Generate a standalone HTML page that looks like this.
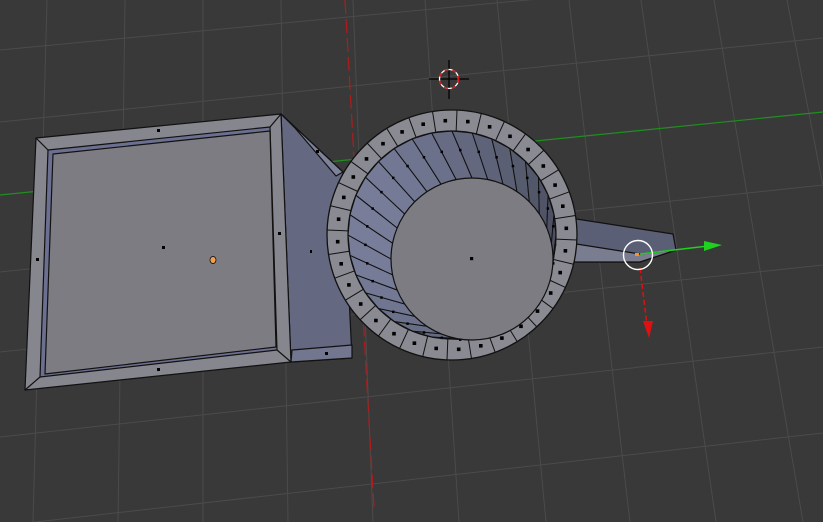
<!DOCTYPE html>
<html><head><meta charset="utf-8"><style>
html,body{margin:0;padding:0;background:#393939;overflow:hidden}
svg{display:block}
</style></head><body>
<svg id="s" width="823" height="522" viewBox="0 0 823 522" xmlns="http://www.w3.org/2000/svg">
<rect width="823" height="522" fill="#393939"/>
<g id="grid" stroke="#4b4b4b" stroke-width="1" fill="none"></g>
<line x1="0" y1="195" x2="823" y2="112" stroke="#1f8f1f" stroke-width="1.2"/>
<line x1="345" y1="0" x2="374" y2="508" stroke="#b01c1c" stroke-width="1.2" stroke-dasharray="14,5"/>

<g stroke="#111" stroke-width="1.2" stroke-linejoin="round">
 <polygon points="281,114 343,172 352,358 291,362" fill="#646880"/>
 <polygon points="281,114 295,128 336,176 343,172" fill="#7d8199"/>
 <polygon points="291,362 352,358 352,345 292,350" fill="#72768e"/>
 <polygon points="36,138 281,114 291,362 25,390" fill="#86868e"/>
 <polygon points="48,150 270,127 277,350 40,377" fill="#6c7090"/>
 <polygon points="53,154 270,131 276,347 45,374" fill="#7c7c82"/>
 <line x1="36" y1="138" x2="48" y2="150"/><line x1="281" y1="114" x2="270" y2="127"/>
 <line x1="291" y1="362" x2="277" y2="350"/><line x1="25" y1="390" x2="40" y2="377"/>
</g>
<g fill="#000">
 <rect x="157" y="129" width="3" height="3"/><rect x="162" y="246" width="3" height="3"/>
 <rect x="36" y="258" width="3" height="3"/><rect x="278" y="232" width="3" height="3"/>
 <rect x="157" y="368" width="3" height="3"/><rect x="316" y="150" width="3" height="3"/>
 <rect x="310" y="250" width="2" height="3"/><rect x="325" y="352" width="3" height="3"/>
</g>
<ellipse cx="213" cy="260" rx="3" ry="3.5" fill="#f0a050" stroke="#000" stroke-width="0.7"/>

<g stroke="#111" stroke-width="1.2" stroke-linejoin="round">
 <polygon points="570,218 673,234 676,250 640,262 568,262" fill="#5b5f75"/>
 <polygon points="570,243 640,254 676,250 640,262 568,262" fill="#7a7d90"/>
</g>

<g id="mug"></g>

<line x1="640" y1="254" x2="708" y2="246" stroke="#1fd01f" stroke-width="1.5"/>
<polygon points="704,241 722,245 704,251" fill="#1fd01f"/>
<line x1="640" y1="268" x2="647" y2="325" stroke="#e01010" stroke-width="1.5" stroke-dasharray="5,3"/>
<polygon points="643,321 653,321 649,338" fill="#e01010"/>
<circle cx="638" cy="255" r="14.5" fill="none" stroke="#fff" stroke-width="1.4"/>
<rect x="635" y="253" width="4" height="3" fill="#ff9020"/>

<g>
 <line x1="449" y1="60" x2="449" y2="99" stroke="#000" stroke-width="1.2"/>
 <line x1="429" y1="79" x2="469" y2="79" stroke="#000" stroke-width="1.2"/>
 <circle cx="449" cy="79" r="9.5" fill="none" stroke="#fff" stroke-width="1.3"/>
 <circle cx="449" cy="79" r="9.5" fill="none" stroke="#e01010" stroke-width="1.3" stroke-dasharray="4,4"/>
</g>
</svg>
<script>
(function(){
var NS="http://www.w3.org/2000/svg";
function el(p,t,a){var e=document.createElementNS(NS,t);for(var k in a)e.setAttribute(k,a[k]);p.appendChild(e);return e;}
var g=document.getElementById('grid');
var tops=[47,125,203,281,353,425,497,569,641,714,787],bots=[33,118,203,288,373,459,546,630,716,803,888];
for(var i=0;i<tops.length;i++)el(g,'line',{x1:tops[i],y1:0,x2:bots[i],y2:522});
var L=[50,122,272,352,437,526],R=[-28,38,185,265,347,433];
for(i=0;i<L.length;i++)el(g,'line',{x1:0,y1:L[i],x2:823,y2:R[i]});
var m=document.getElementById('mug');
var cx=452,cy=235,ro=125,ri=104,fx=472,fy=259,fr=81,N=32;
el(m,'circle',{cx:cx,cy:cy,r:ro,fill:'#8a8a92',stroke:'#111','stroke-width':1.3});
for(i=0;i<N;i++){
 var a1=i/N*2*Math.PI,a2=(i+1)/N*2*Math.PI,am=(a1+a2)/2;
 var p=[[cx+ri*Math.cos(a1),cy+ri*Math.sin(a1)],[cx+ri*Math.cos(a2),cy+ri*Math.sin(a2)],
        [fx+fr*Math.cos(a2),fy+fr*Math.sin(a2)],[fx+fr*Math.cos(a1),fy+fr*Math.sin(a1)]];
 var l=0.5-0.5*Math.cos(am-Math.PI*1.05);
 var t=Math.max(0,Math.min(1,(1-l)));
 var r=Math.round(75+t*45),gg=Math.round(79+t*47),b=Math.round(96+t*58);
 el(m,'polygon',{points:p.map(function(q){return q[0].toFixed(1)+','+q[1].toFixed(1)}).join(' '),fill:'rgb('+r+','+gg+','+b+')',stroke:'#111','stroke-width':1});
 var dx=(p[0][0]*0.6+p[3][0]*0.4),dy=(p[0][1]*0.6+p[3][1]*0.4);
 el(m,'rect',{x:(dx-1).toFixed(1),y:(dy-1).toFixed(1),width:2.5,height:2.5,fill:'#000'});
}
for(i=0;i<N;i++){
 var a=i/N*2*Math.PI+0.04;
 el(m,'line',{x1:cx+ri*Math.cos(a),y1:cy+ri*Math.sin(a),x2:cx+ro*Math.cos(a),y2:cy+ro*Math.sin(a),stroke:'#111','stroke-width':1});
 var am2=a+Math.PI/N,rm=(ri+ro)/2;
 el(m,'rect',{x:(cx+rm*Math.cos(am2)-1.8).toFixed(1),y:(cy+rm*Math.sin(am2)-1.8).toFixed(1),width:3.6,height:3.6,fill:'#000'});
}
el(m,'circle',{cx:cx,cy:cy,r:ri,fill:'none',stroke:'#111','stroke-width':1.2});
el(m,'circle',{cx:fx,cy:fy,r:fr,fill:'#7c7c82',stroke:'#111','stroke-width':1.2});
el(m,'rect',{x:470,y:257,width:3.2,height:3.2,fill:'#000'});
})();
</script>
</body></html>
